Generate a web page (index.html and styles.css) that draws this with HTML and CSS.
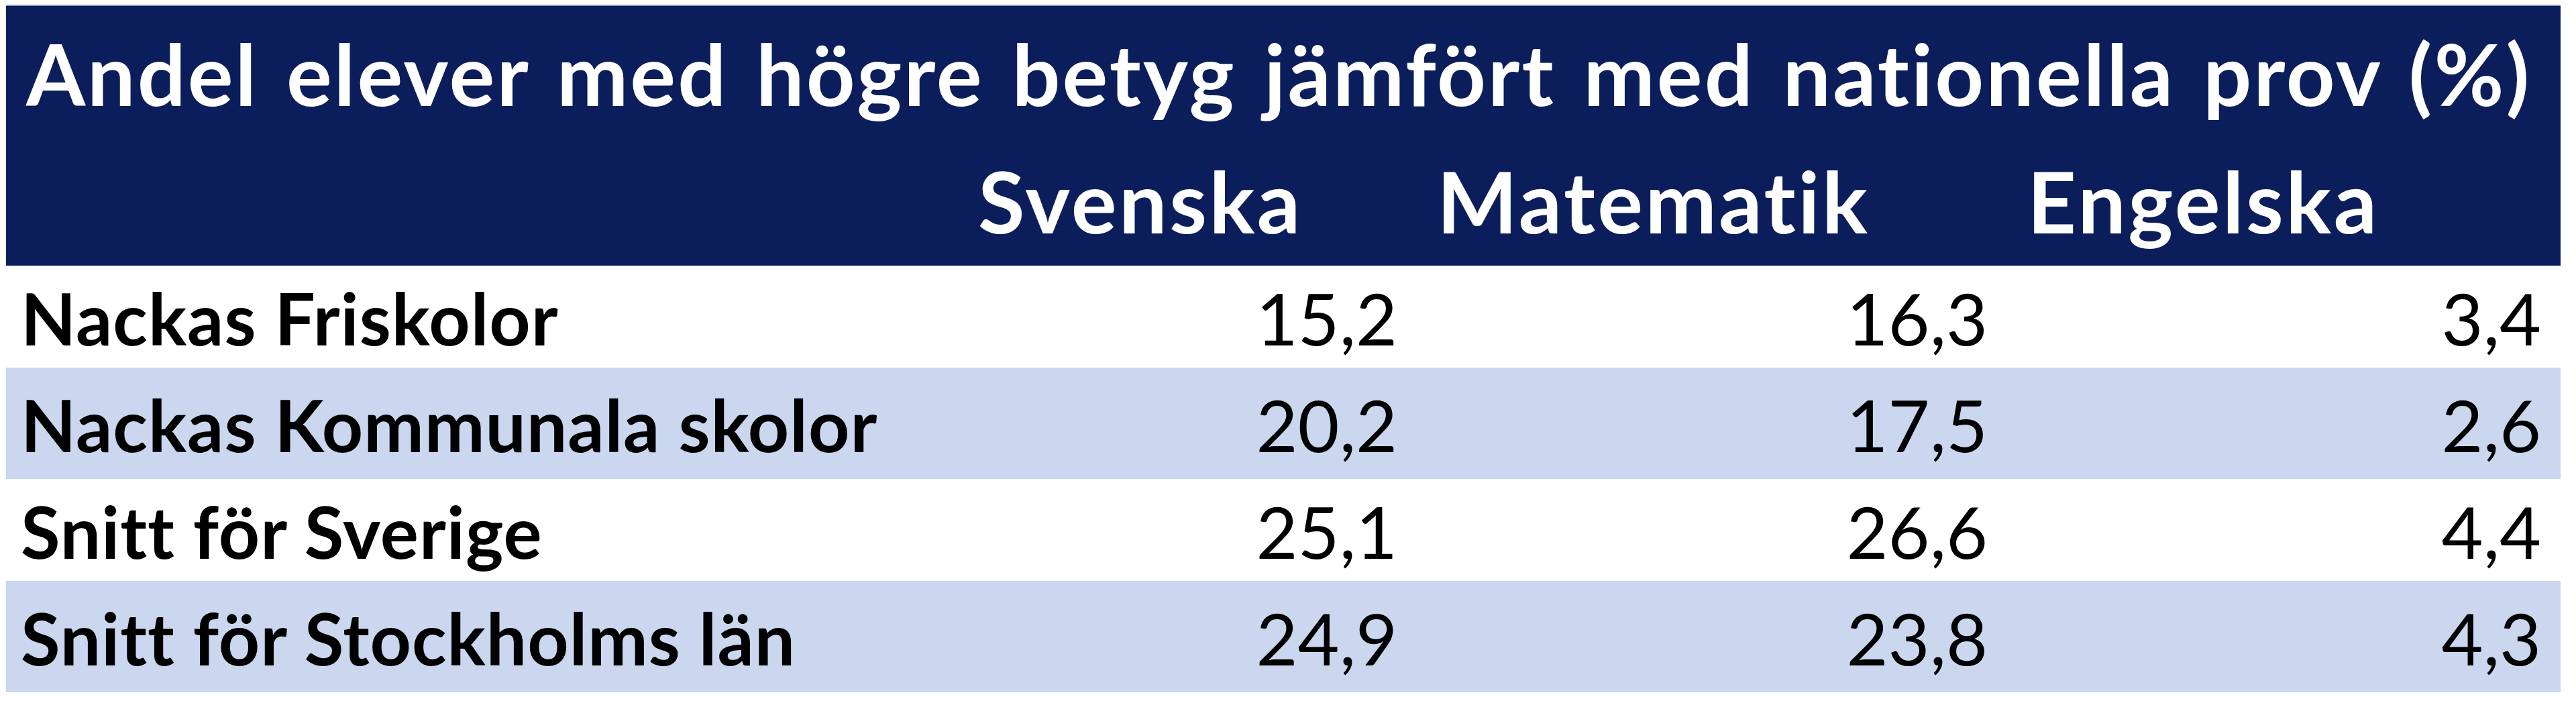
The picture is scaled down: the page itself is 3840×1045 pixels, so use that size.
FILE: index.html
```html
<!DOCTYPE html>
<html lang="sv">
<head>
<meta charset="utf-8">
<title>Andel elever med högre betyg jämfört med nationella prov</title>
<link rel="stylesheet" href="styles.css">
</head>
<body>
<div class="page">
  <div class="table">
    <div class="head">
      <div class="title">Andel elever med högre betyg jämfört med nationella prov (%)</div>
      <div class="hcell"></div>
      <div class="hcell">Svenska</div>
      <div class="hcell">Matematik</div>
      <div class="hcell">Engelska</div>
    </div>
    <div class="row">
      <div class="label">Nackas Friskolor</div>
      <div class="num">15,2</div>
      <div class="num">16,3</div>
      <div class="num">3,4</div>
    </div>
    <div class="row alt">
      <div class="label">Nackas Kommunala skolor</div>
      <div class="num">20,2</div>
      <div class="num">17,5</div>
      <div class="num">2,6</div>
    </div>
    <div class="row">
      <div class="label">Snitt för Sverige</div>
      <div class="num">25,1</div>
      <div class="num">26,6</div>
      <div class="num">4,4</div>
    </div>
    <div class="row alt">
      <div class="label">Snitt för Stockholms län</div>
      <div class="num">24,9</div>
      <div class="num">23,8</div>
      <div class="num">4,3</div>
    </div>
  </div>
</div>
</body>
</html>
```

FILE: styles.css
```css
html, body {
  margin: 0;
  padding: 0;
  background: #ffffff;
}

.page {
  padding: 7px 0 0 9px;
  font-family: "Lato", "Open Sans", "DejaVu Sans", sans-serif;
}

.table {
  width: 3808px;
}

.head,
.row {
  display: grid;
  grid-template-columns: 1419px 684px 880px 825px;
}

.head {
  background: #0b1e5b;
  border-top: 2px solid #8e97b8;
  color: #ffffff;
  font-weight: 700;
  font-size: 127px;
  line-height: 1.2;
  height: 389px;
  box-sizing: border-box;
  padding-top: 24px;
  row-gap: 38px;
  align-content: start;
}

.title {
  grid-column: 1 / -1;
  padding-left: 30px;
  letter-spacing: 3px;
  word-spacing: 8px;
  white-space: nowrap;
}

.hcell {
  padding-left: 30px;
  letter-spacing: 3.5px;
  white-space: nowrap;
}

.row {
  height: 152px;
  box-sizing: border-box;
  padding-top: 14px;
  font-size: 107px;
  line-height: 1.2;
  color: #000000;
  background: #ffffff;
}

.row.alt {
  height: 166px;
  padding-top: 21px;
  background: #cad7ee;
}

.label {
  font-weight: 700;
  padding-left: 22px;
  letter-spacing: 1px;
  white-space: nowrap;
}

.num {
  font-weight: 400;
  text-align: right;
  padding-right: 29px;
  white-space: nowrap;
}
```
